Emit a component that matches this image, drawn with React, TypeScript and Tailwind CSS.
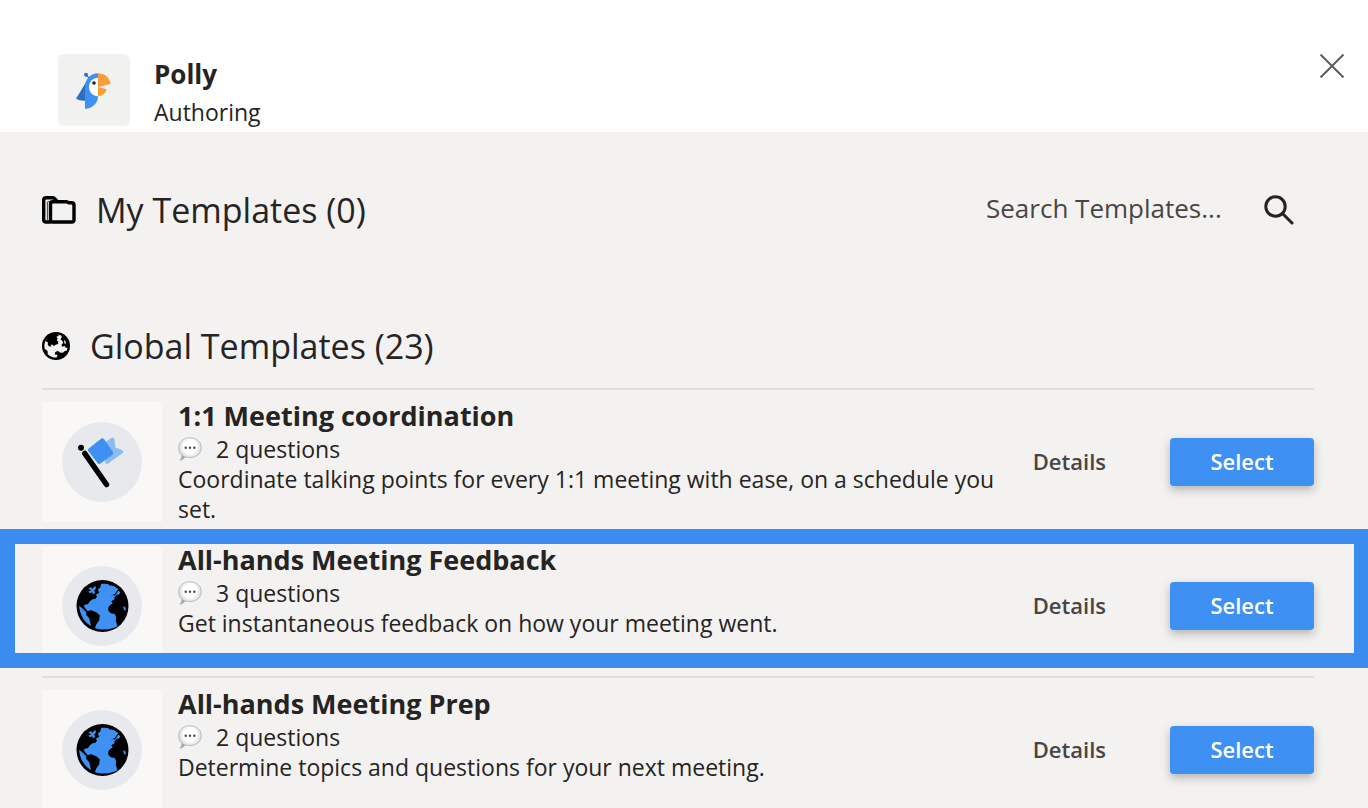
type Template = {
  title: string;
  questions: number;
  description: string;
  icon: "flag" | "earth";
  highlighted?: boolean;
};

const templates: Template[] = [
  {
    title: "1:1 Meeting coordination",
    questions: 2,
    description:
      "Coordinate talking points for every 1:1 meeting with ease, on a schedule you set.",
    icon: "flag",
  },
  {
    title: "All-hands Meeting Feedback",
    questions: 3,
    description: "Get instantaneous feedback on how your meeting went.",
    icon: "earth",
    highlighted: true,
  },
  {
    title: "All-hands Meeting Prep",
    questions: 2,
    description: "Determine topics and questions for your next meeting.",
    icon: "earth",
  },
];

function PollyLogo() {
  return (
    <svg viewBox="0 0 150 150" className="size-[50px]" aria-hidden="true">
      <path d="M60 37 L21 101 Q34 109 49 107 V70 Z" fill="#2d6fc4" />
      <circle cx="51" cy="29" r="6" fill="#2d6fc4" />
      <path d="M53 31 L61 40" stroke="#2d6fc4" strokeWidth="4" />
      <path d="M88 25 C64 25 48 43 48 66 V132 C70 131 87 115 87 94 L88 94 Z" fill="#3e91f2" />
      <path d="M88 38 C70 38 60 51 60 66 C60 81 70 93 88 94 Z" fill="#fff" />
      <circle cx="75" cy="54" r="5.5" fill="#16243f" />
      <path d="M87 25 C107 25 121 37 125 56 L87 67 Z" fill="#f5a03c" />
      <path d="M87 66 L113 73 C110 85 100 94 87 94 Z" fill="#f5a03c" />
    </svg>
  );
}

function FoldersIcon() {
  return (
    <svg viewBox="0 0 34 28" className="h-7 w-[34px] shrink-0" fill="none" stroke="#000" aria-hidden="true">
      <path
        d="M9 26 H4 Q1.700 26 1.700 23.700 V4 Q1.700 1.700 4 1.700 H10.500 Q12 1.700 13.400 3.400 L15 5.200"
        strokeWidth="3.4"
      />
      <path
        d="M8.500 24 V7.500 Q8.500 5.700 10.500 5.700 H24.500 L27 6.800 H29.500 Q32 6.800 32 9 V23.700 Q32 26 29.700 26 H10.800 Q8.500 26 8.500 24 Z"
        strokeWidth="3.4"
      />
      <path d="M5.400 24 V6 L8 5" strokeWidth="1" stroke="#444" />
    </svg>
  );
}

function GlobeIcon() {
  return (
    <svg viewBox="20 19 82 82" className="size-7 shrink-0" aria-hidden="true">
      <circle cx="61" cy="60" r="41" fill="#000" />
      <circle cx="61" cy="60" r="34" fill="#f3f2f1" />
      <g fill="#000">
        <path d="M30 45 L40 28 L62 24 L70 30 L62 33 L66 38 L63 43 L68 47 L67 54 L60 56 L55 60 L49 55 L44 63 L37 58 L37 49 Z" />
        <path d="M76 27 L88 35 L96 50 L97 64 L90 66 L86 60 L79 62 L77 56 L82 51 L79 44 L74 41 L78 34 Z" />
        <path d="M58 79 L66 74 L72 79 L81 80 L88 74 L94 76 L86 90 L72 96 L62 94 L66 86 L58 85 Z" />
        <path d="M27 68 L36 74 L37 84 L32 84 Z" />
      </g>
      <path d="M84 42 L89 46 L90 54 L86 53 Z" fill="#f3f2f1" />
    </svg>
  );
}

function EarthArt() {
  return (
    <svg viewBox="48 50 158 156" className="h-[52px] w-[53px]" aria-hidden="true">
      <circle cx="127" cy="128" r="78" fill="#000" />
      <path
        d="M123 61 L144 62 L147 66 L161 68 L174 77 L170 84 L164 92 L154 96 L156 101 L165 104 L160 110 L153 114 L158 120 L150 125 L144 133 L145 143 L152 150 L164 152 L168 162 L167 173 L172 189 C157 199 126 202 104 194 L109 182 L117 171 L119 156 L108 147 L94 141 L82 143 L72 130 L72 125 L84 122 L87 116 L97 108 L106 106 L111 99 L106 95 L117 88 L113 78 L120 73 Z"
        fill="#3e91f2"
      />
      <path
        d="M57 127 L68 136 L78 146 L78 155 L87 164 L90 177 L93 188 C73 178 58 153 57 127 Z"
        fill="#3e91f2"
      />
      <path
        d="M84 75 L94 72 L95 77 L105 68 L108 74 L102 82 L105 90 L98 93 L96 87 L88 90 L85 84 L93 82 Z"
        fill="#3e91f2"
      />
      <path d="M152 100 L158 94 L164 98 L174 82 L180 86 L178 93 L170 94 L164 101 L155 105 Z" fill="#3e91f2" />
      <path d="M189 128 L196 132 L197 142 L191 139 Z" fill="#3e91f2" />
    </svg>
  );
}

function FlagArt() {
  return (
    <svg viewBox="0 0 80 80" className="size-20" aria-hidden="true">
      <path
        d="M42 21 L50 15.500 Q52.500 15 52.500 18 L53.500 25.500 L60 28 Q62.500 30 60 31.500 L45.500 42 Q43 42 43 39 Z"
        fill="#8fbcf0"
      />
      <path
        d="M26.800 26.500 L39 16.800 Q40.800 15.300 42.200 17.300 L51 30 Q52 31.500 50.500 32.800 L38.500 41.500 Q36.500 42.500 35.500 41 L26.200 29 Q25.300 27.800 26.800 26.500 Z"
        fill="#3e91f2"
      />
      <circle cx="19" cy="25.700" r="3" fill="#000" />
      <path d="M22.800 31.500 L44.500 62.500" stroke="#000" strokeWidth="5.500" strokeLinecap="round" />
    </svg>
  );
}

function SpeechBubble() {
  return (
    <svg viewBox="0 0 24 24" className="size-6" aria-hidden="true">
      <defs>
        <radialGradient id="bubble" cx="0.5" cy="0.4" r="0.6">
          <stop offset="0.5" stopColor="#fff" />
          <stop offset="1" stopColor="#c4c4c4" />
        </radialGradient>
      </defs>
      <path
        d="M12 0.800 C18.500 0.800 23.300 4.800 23.300 10.700 C23.300 16.600 18.500 20.500 12 20.500 C10.300 20.500 8.600 20.400 7.400 19.900 C6 21.500 4.500 22.600 2 23.300 C3.400 21.500 3.900 20 3.700 18.200 C1.800 16.500 0.700 13.800 0.700 10.700 C0.700 4.800 5.500 0.800 12 0.800 Z"
        fill="url(#bubble)"
        stroke="#b4b4b4"
        strokeWidth="0.8"
      />
      <path d="M2 23.300 C3.400 21.500 3.900 20 3.700 18.200 L7.400 19.900 C6 21.500 4.500 22.600 2 23.300 Z" fill="#a8a8a8" />
      <g fill="#4a4a4a">
        <circle cx="7.700" cy="10.700" r="1.200" />
        <circle cx="12" cy="10.700" r="1.200" />
        <circle cx="16.300" cy="10.700" r="1.200" />
      </g>
    </svg>
  );
}

function TemplateRow({ template }: { template: Template }) {
  return (
    <li className="relative flex min-h-36 items-start border-t-2 border-[#e1dfdd] pt-3">
      <div className="flex size-[120px] shrink-0 items-center justify-center bg-[#f9f8f7]">
        <div className="flex size-20 items-center justify-center rounded-full bg-[#e7e9ed]">
          {template.icon === "flag" ? <FlagArt /> : <EarthArt />}
        </div>
      </div>
      <div className="ml-4 min-w-0 flex-1">
        <h3 className="pb-1 text-[27px] leading-7 font-bold">{template.title}</h3>
        <p className="flex items-center gap-[14px] text-[23px] leading-[30px]">
          <SpeechBubble />
          {template.questions} questions
        </p>
        <p className="text-[23px] leading-[30px]">{template.description}</p>
      </div>
      <div className="ml-9 flex h-[120px] shrink-0 items-center gap-16">
        <button type="button" className="pb-[2px] text-[22px] font-semibold text-[#484644]">
          Details
        </button>
        <button
          type="button"
          className="h-12 w-36 rounded bg-[#3e91f2] pb-[2px] text-[22px] font-semibold text-white shadow-[0_4px_10px_rgba(0,0,0,0.25)]"
        >
          Select
        </button>
      </div>
      {template.highlighted && (
        <div className="pointer-events-none absolute -top-[5px] -right-[54px] -left-[42px] h-[139px] border-[15px] border-r-[14px] border-[#3a8dee]" />
      )}
    </li>
  );
}

export default function App() {
  return (
    <div className="flex h-screen flex-col bg-[#f3f2f1] font-['Open_Sans','Noto_Sans',sans-serif] text-[#252423]">
      <header className="flex shrink-0 items-start bg-white pt-[54px] pr-6 pb-[2px] pl-[58px]">
        <div className="flex size-[72px] items-center justify-center rounded-md bg-[#f1f1ef]">
          <PollyLogo />
        </div>
        <div className="ml-6 flex-1">
          <h1 className="text-[26px] leading-10 font-bold">Polly</h1>
          <p className="text-[23px] leading-9">Authoring</p>
        </div>
        <button type="button" aria-label="Close" className="text-[#605e5c]">
          <svg viewBox="0 0 24 24" className="size-6" fill="none" stroke="currentColor" strokeWidth="2" aria-hidden="true">
            <path d="M0.500 0.500 L23.500 23.500 M23.500 0.500 L0.500 23.500" />
          </svg>
        </button>
      </header>

      <main className="min-h-0 flex-1 overflow-x-hidden overflow-y-auto pr-[54px] pl-[42px] [scrollbar-width:none]">
        <section className="flex items-center justify-between pt-[54px]">
          <h2 className="flex items-center gap-5 text-[34px] leading-[48px]">
            <FoldersIcon />
            My Templates (0)
          </h2>
          <form role="search" className="flex items-center pr-5" onSubmit={(e) => e.preventDefault()}>
            <input
              type="text"
              aria-label="Search templates"
              placeholder="Search Templates..."
              className="w-[278px] bg-transparent pb-1 text-[26px] leading-10 outline-none placeholder:text-[#484644]"
            />
            <button type="submit" aria-label="Search">
              <svg viewBox="0 0 30 30" className="size-[30px]" fill="none" stroke="#252423" strokeWidth="3" strokeLinecap="round" aria-hidden="true">
                <circle cx="11.500" cy="11.500" r="9.700" />
                <path d="M18.800 18.800 L28 28" />
              </svg>
            </button>
          </form>
        </section>

        <section className="pt-[88px]">
          <h2 className="flex items-center gap-5 pb-[18px] text-[34px] leading-[48px]">
            <GlobeIcon />
            Global Templates (23)
          </h2>
          <ul>
            {templates.map((template) => (
              <TemplateRow key={template.title} template={template} />
            ))}
          </ul>
        </section>
      </main>
    </div>
  );
}
